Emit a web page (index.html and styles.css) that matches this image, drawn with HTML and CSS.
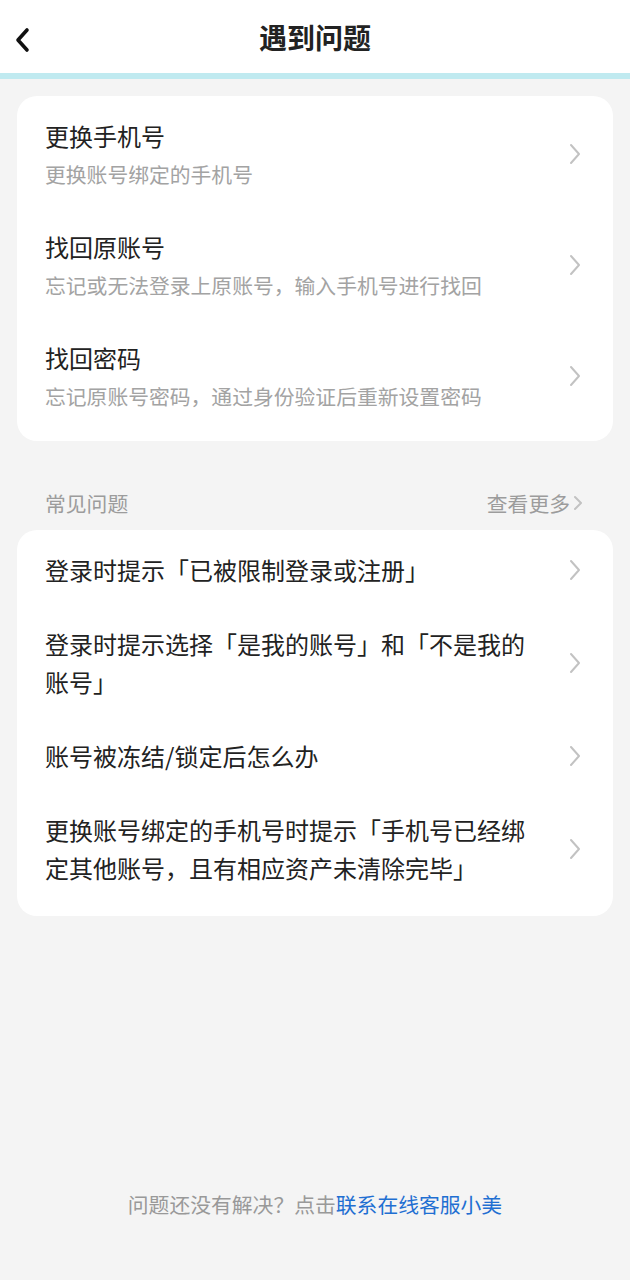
FILE: index.html
```html
<!DOCTYPE html>
<html lang="zh-CN">
<head>
  <meta charset="UTF-8" />
  <meta name="viewport" content="width=device-width, initial-scale=1.0" />
  <title>遇到问题</title>
  <link rel="stylesheet" href="styles.css">
</head>
<body>
  <div class="header">
    <svg class="back" width="16" height="26" viewBox="0 0 16 26">
      <polyline points="13,3 4,13 13,23" fill="none" stroke="#111" stroke-width="3.6" stroke-linecap="round" stroke-linejoin="round"/>
    </svg>
    <h1>遇到问题</h1>
  </div>

  <div class="card top-card">
    <div class="item">
      <div class="text">
        <div class="title">更换手机号</div>
        <div class="desc">更换账号绑定的手机号</div>
      </div>
      <svg class="arrow" width="14" height="24" viewBox="0 0 14 24"><polyline points="3,3 11,12 3,21" /></svg>
    </div>
    <div class="item">
      <div class="text">
        <div class="title">找回原账号</div>
        <div class="desc">忘记或无法登录上原账号，输入手机号进行找回</div>
      </div>
      <svg class="arrow" width="14" height="24" viewBox="0 0 14 24"><polyline points="3,3 11,12 3,21" /></svg>
    </div>
    <div class="item">
      <div class="text">
        <div class="title">找回密码</div>
        <div class="desc">忘记原账号密码，通过身份验证后重新设置密码</div>
      </div>
      <svg class="arrow" width="14" height="24" viewBox="0 0 14 24"><polyline points="3,3 11,12 3,21" /></svg>
    </div>
  </div>

  <div class="section-head">
    <span>常见问题</span>
    <span class="more">查看更多
      <svg width="12" height="20" viewBox="0 0 12 20"><polyline points="3,4 9,10 3,16" /></svg>
    </span>
  </div>

  <div class="card faq-card">
    <div class="item">
      <div class="question">登录时提示「已被限制登录或注册」</div>
      <svg class="arrow" width="14" height="24" viewBox="0 0 14 24"><polyline points="3,3 11,12 3,21" /></svg>
    </div>
    <div class="item">
      <div class="question">登录时提示选择「是我的账号」和「不是我的账号」</div>
      <svg class="arrow" width="14" height="24" viewBox="0 0 14 24"><polyline points="3,3 11,12 3,21" /></svg>
    </div>
    <div class="item">
      <div class="question">账号被冻结/锁定后怎么办</div>
      <svg class="arrow" width="14" height="24" viewBox="0 0 14 24"><polyline points="3,3 11,12 3,21" /></svg>
    </div>
    <div class="item">
      <div class="question">更换账号绑定的手机号时提示「手机号已经绑定其他账号，且有相应资产未清除完毕」</div>
      <svg class="arrow" width="14" height="24" viewBox="0 0 14 24"><polyline points="3,3 11,12 3,21" /></svg>
    </div>
  </div>

  <div class="footer">问题还没有解决？点击<a class="link">联系在线客服小美</a></div>
</body>
</html>
```

FILE: styles.css
```css
* {
  box-sizing: border-box;
}
body {
  margin: 0;
  min-height: 100vh;
  background: #f4f4f4;
  font-family: "Noto Sans CJK SC", "Noto Sans", sans-serif;
  color: #222;
  display: flex;
  flex-direction: column;
}
.header {
  position: relative;
  height: 79px;
  background: #fff;
  border-bottom: 6px solid #c0eaf0;
  display: flex;
  align-items: center;
  justify-content: center;
}
.header h1 {
  margin: 0;
  font-size: 28px;
  font-weight: 700;
  line-height: 36px;
}
.back {
  position: absolute;
  left: 14px;
  top: 27px;
}
.card {
  margin: 0 17px;
  background: #fff;
  border-radius: 20px;
}
.top-card {
  margin-top: 17px;
  padding: 3px 0 9px;
}
.faq-card {
  padding: 3px 0 11px;
}
.item {
  display: flex;
  align-items: center;
  justify-content: space-between;
  padding: 0 31px 0 28px;
}
.top-card .item {
  padding-top: 21px;
  padding-bottom: 22px;
}
.faq-card .item {
  padding-top: 18px;
  padding-bottom: 18px;
}
.title {
  font-size: 24px;
  line-height: 32px;
}
.desc {
  margin-top: 8px;
  font-size: 20.8px;
  line-height: 28px;
  color: #a3a3a3;
}
.question {
  width: 490px;
  font-size: 24px;
  line-height: 38px;
}
.arrow {
  flex-shrink: 0;
}
.arrow polyline,
.more polyline {
  fill: none;
  stroke: #c2c2c2;
  stroke-width: 2;
  stroke-linecap: round;
  stroke-linejoin: round;
}
.section-head {
  display: flex;
  justify-content: space-between;
  align-items: center;
  margin: 48px 0 13px;
  padding: 0 46px 0 45px;
  font-size: 20.8px;
  line-height: 28px;
  color: #9c9c9c;
}
.more {
  display: flex;
  align-items: center;
}
.more svg {
  margin-left: 2px;
}
.footer {
  margin-top: auto;
  padding-bottom: 62px;
  text-align: center;
  font-size: 20.8px;
  line-height: 28px;
  color: #999;
}
.link {
  color: #1f6fd2;
}
```
